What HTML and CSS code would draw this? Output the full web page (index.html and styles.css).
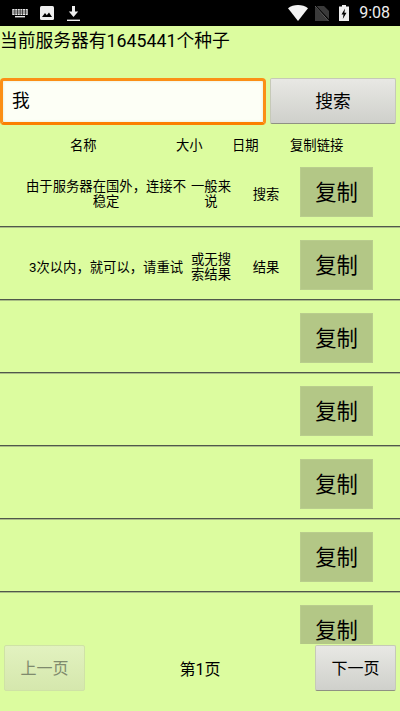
FILE: index.html
```html
<!DOCTYPE html>
<html lang="zh">
<head>
<meta charset="utf-8">
<title>种子搜索</title>
<link rel="stylesheet" href="styles.css">
</head>
<body>
<div class="app">
  <div class="status">
    <div class="status-left">
      <svg class="ic-kb" viewBox="0 0 16 9"><g fill="#e8e8e8"><rect x="0" y="0" width="16" height="6" rx="1"/><rect x="3" y="7" width="10" height="1.4"/></g><g fill="#000"><rect x="0" y="1.7" width="16" height=".6"/><rect x="0" y="3.7" width="16" height=".6"/><rect x="2.6" y="0" width=".6" height="6"/><rect x="5.2" y="0" width=".6" height="6"/><rect x="7.8" y="0" width=".6" height="6"/><rect x="10.4" y="0" width=".6" height="6"/><rect x="13" y="0" width=".6" height="6"/></g></svg>
      <svg class="ic-img" viewBox="0 0 14 14"><rect width="14" height="14" rx="1.5" fill="#eee"/><path d="M2 11l3-4 1.8 2.2L9 6.5l3 4.5z" fill="#000"/></svg>
      <svg class="ic-dl" viewBox="0 0 13 15"><path d="M5 0h3v5.5h3.2L6.5 11 1.8 5.5H5z" fill="#eee"/><rect y="13.6" width="13" height="1.4" fill="#eee"/></svg>
    </div>
    <div class="status-right">
      <svg class="ic-wifi" viewBox="0 0 20 16"><path d="M0 3.2C2.8 1 6.2 0 10 0s7.2 1 10 3.2L10 16z" fill="#f2f2f2"/></svg>
      <svg class="ic-sim" viewBox="0 0 14 15"><path d="M0 0h9l5 5v10H0z" fill="#3a3a3a"/><path d="M.5 0L14 14.5" stroke="#000" stroke-width="1.6"/><path d="M0 0l13.6 15" stroke="#8a8a8a" stroke-width=".7"/></svg>
      <svg class="ic-bat" viewBox="0 0 10 16"><path d="M3 0h4v1.5h3V16H0V1.5h3z" fill="#eee"/><path d="M6 3.5L2.5 9.5h2L3.8 14l3.7-6.2h-2.1z" fill="#000"/></svg>
      <span class="time">9:08</span>
    </div>
  </div>
  <div class="title">当前服务器有1645441个种子</div>
  <div class="search">
    <div class="input">我</div>
    <button class="btn btn-search">搜索</button>
  </div>
  <div class="head">
    <span class="h-name">名称</span>
    <span class="h-size">大小</span>
    <span class="h-date">日期</span>
    <span class="h-link">复制链接</span>
  </div>
  <div class="list">
    <div class="row"><div class="c-name">由于服务器在国外，连接不稳定</div><div class="c-size">一般来说</div><div class="c-date">搜索</div><button class="copy">复制</button></div>
    <div class="row"><div class="c-name">3次以内，就可以，请重试</div><div class="c-size">或无搜索结果</div><div class="c-date">结果</div><button class="copy">复制</button></div>
    <div class="row"><div class="c-name"></div><div class="c-size"></div><div class="c-date"></div><button class="copy">复制</button></div>
    <div class="row"><div class="c-name"></div><div class="c-size"></div><div class="c-date"></div><button class="copy">复制</button></div>
    <div class="row"><div class="c-name"></div><div class="c-size"></div><div class="c-date"></div><button class="copy">复制</button></div>
    <div class="row"><div class="c-name"></div><div class="c-size"></div><div class="c-date"></div><button class="copy">复制</button></div>
    <div class="row"><div class="c-name"></div><div class="c-size"></div><div class="c-date"></div><button class="copy">复制</button></div>
  </div>
  <div class="pager">
    <button class="btn btn-page" disabled>上一页</button>
    <span class="page-no">第1页</span>
    <button class="btn btn-page">下一页</button>
  </div>
</div>
</body>
</html>
```
FILE: styles.css
```css
* { box-sizing: border-box; }
html, body { margin: 0; padding: 0; }
body {
  width: 400px;
  height: 711px;
  overflow: hidden;
  background: #dcfc9f;
  color: #000;
  font-family: Roboto, "Noto Sans CJK SC", sans-serif;
}
.app { display: flex; flex-direction: column; height: 711px; }
.status {
  flex: none;
  height: 26px;
  background: #000;
  display: flex;
  justify-content: space-between;
  align-items: center;
  padding: 0 10px 0 12px;
  color: #eee;
}
.status-left, .status-right { display: flex; align-items: center; }
.ic-kb { width: 16px; height: 9px; margin-right: 12px; }
.ic-img { width: 14px; height: 14px; margin-right: 13px; }
.ic-dl { width: 13px; height: 15px; }
.ic-wifi { width: 20px; height: 16px; margin-right: 7px; }
.ic-sim { width: 14px; height: 15px; margin-right: 10px; }
.ic-bat { width: 10px; height: 16px; margin-right: 10px; }
.time { font-size: 16px; line-height: 20px; }
.title { flex: none; height: 52px; padding-top: 2px; font-size: 17.78px; line-height: 26px; }
.search { flex: none; display: flex; height: 47px; padding-right: 4px; }
.input {
  width: 266px;
  height: 47px;
  border: 3px solid #fb8f16;
  border-bottom-color: #fb7f00;
  border-radius: 4px;
  background: #fdfff6;
  box-shadow: inset 0 0 3px #e6e9cf;
  padding-left: 9px;
  font-size: 17.78px;
  line-height: 41px;
}
.btn {
  font-family: inherit;
  border: 1px solid #c6c9b8;
  border-bottom: 1px solid #8f9183;
  border-radius: 2px;
  background: linear-gradient(#e8e8e4, #cfd0cb);
  color: #000;
  padding: 0 0 2px;
}
.btn-search { width: 126px; height: 46px; margin-left: 4px; font-size: 17.78px; }
.head {
  flex: none;
  height: 29px;
  display: flex;
  align-items: flex-end;
  padding-left: 70px;
  font-size: 13.33px;
  line-height: 16px;
}
.h-name { width: 106px; }
.h-size { width: 56px; }
.h-date { width: 58px; }
.list { flex: 1; min-height: 0; overflow: hidden; }
.row {
  height: 73px;
  display: flex;
  align-items: center;
  padding: 13px 0 9px 26px;
  border-bottom: 1px solid #50574a;
  box-shadow: 0 1px 0 #a9bd85;
  font-size: 13.33px;
  line-height: 15px;
  text-align: center;
}
.c-name { width: 160px; padding-top: 4px; }
.c-size { width: 50px; padding: 4px 4.5px 0; }
.c-date { width: 60px; padding-top: 4px; }
.copy {
  width: 73px;
  height: 50px;
  margin-left: 4px;
  border: 1px solid #b9cd8d;
  padding: 0 0 4px;
  background: #b3c786;
  font-family: inherit;
  font-size: 21.33px;
  color: #000;
}
.pager {
  flex: none;
  height: 67px;
  display: flex;
  justify-content: space-between;
  align-items: flex-start;
  padding: 1px 4px 0;
}
.btn-page { width: 81px; height: 46px; font-size: 16px; }
.btn-page:disabled {
  background: linear-gradient(#e2f2bf, #d5e7ad);
  border-color: #cfe2a6;
  color: #7f8a6d;
}
.page-no { font-size: 16px; line-height: 50px; }
```
